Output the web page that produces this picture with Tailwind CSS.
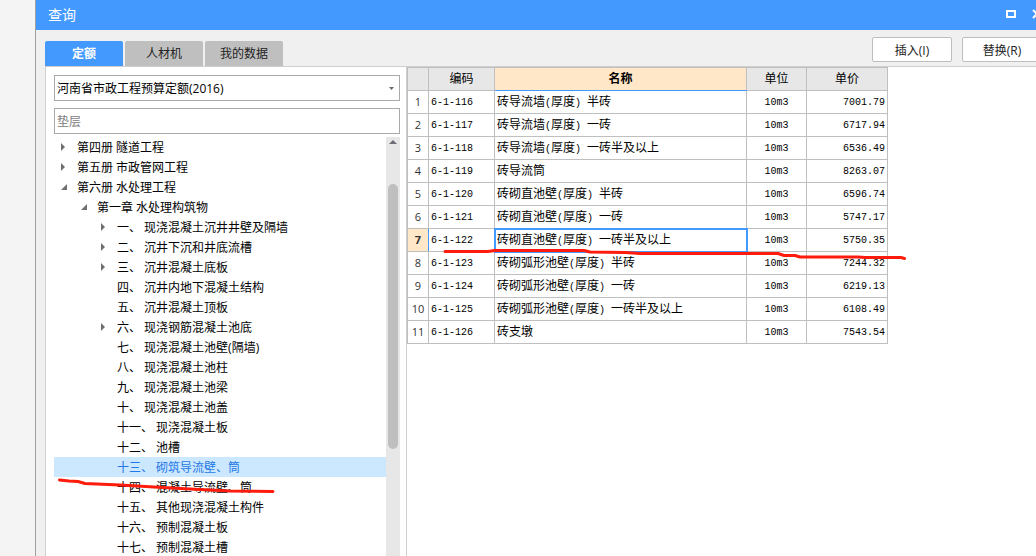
<!DOCTYPE html>
<html lang="zh-CN">
<head>
<meta charset="utf-8">
<title>查询</title>
<script src="https://cdn.jsdelivr.net/npm/@tailwindcss/browser@4"></script>
</head>
<body class="relative h-screen overflow-hidden bg-[#f4f4f4] pl-[35px] font-['Open_Sans','Noto_Sans_CJK_SC',sans-serif] text-[12px] text-black">
<div class="flex h-full flex-col overflow-hidden border-l border-[#a0a0a0] bg-[#f0f0f0]">
  <header class="flex h-[30px] shrink-0 items-center justify-between bg-[#4499ff] pl-3 text-white">
    <h1 class="text-[14px] leading-5">查询</h1>
    <div class="-mr-1.5 flex gap-4 pb-0.5">
      <button aria-label="最大化"><svg class="block h-2.5 w-2.5" viewBox="0 0 10 10"><path d="M1 2h8v6H1z" fill="none" stroke="#fff" stroke-width="2"/></svg></button>
      <button aria-label="关闭"><svg class="block h-2.5 w-2.5" viewBox="0 0 10 10"><path d="M1 1l8 8M9 1L1 9" fill="none" stroke="#fff" stroke-width="2"/></svg></button>
    </div>
  </header>
  <div class="flex h-9 shrink-0 items-end justify-between pl-[9px]">
    <nav class="flex gap-0.5" role="tablist">
      <button role="tab" aria-selected="true" class="h-[25px] w-[78px] rounded-t-xs bg-[#4499ff] font-bold text-white">定额</button>
      <button role="tab" aria-selected="false" class="h-[25px] w-[78px] rounded-t-xs bg-[#bfbfbf] text-[#222]">人材机</button>
      <button role="tab" aria-selected="false" class="h-[25px] w-[78px] rounded-t-xs bg-[#bfbfbf] text-[#222]">我的数据</button>
    </nav>
    <div class="-mr-1.5 flex gap-2.5 pb-1">
      <button class="h-[25px] w-20 rounded-xs border border-[#bebebe] bg-white pt-0.5 text-[#222]">插入(I)</button>
      <button class="h-[25px] w-20 rounded-xs border border-[#bebebe] bg-white pt-0.5 text-[#222]">替换(R)</button>
    </div>
  </div>
  <main class="ml-[9px] flex min-h-0 flex-1 border-t border-l border-[#cfcfcf] bg-white">
    <aside class="flex w-[361px] shrink-0 flex-col border-r border-[#cfcfcf] pt-2 pr-1.5 pl-2">
      <div class="relative">
        <select aria-label="定额库" class="block h-[26px] w-full appearance-none border border-[#a9a9a9] bg-white px-0.5 pt-0.5">
          <option>河南省市政工程预算定额(2016)</option>
        </select>
        <svg class="pointer-events-none absolute top-3 right-1.5 h-[3px] w-[5px]" viewBox="0 0 5 3"><path d="M0 0h5L2.5 3z" fill="#6a6a6a"/></svg>
      </div>
      <input aria-label="搜索" placeholder="垫层" class="mt-[7px] block h-[26px] w-full shrink-0 border border-[#a9a9a9] px-0.5 placeholder:text-[#808080]">
      <div class="mt-[3px] flex min-h-0 flex-1 overflow-hidden">
        <ul role="tree" class="flex-1 leading-[22px] whitespace-nowrap">
          <li class="flex h-5 items-start pl-[7px]"><button aria-label="展开" class="w-4 self-center"><svg class="block h-2 w-2" viewBox="0 0 8 8"><path d="M0 0v8l4-4z" fill="#707070"/></svg></button><span>第四册 隧道工程</span></li>
          <li class="flex h-5 items-start pl-[7px]"><button aria-label="展开" class="w-4 self-center"><svg class="block h-2 w-2" viewBox="0 0 8 8"><path d="M0 0v8l4-4z" fill="#707070"/></svg></button><span>第五册 市政管网工程</span></li>
          <li class="flex h-5 items-start pl-[7px]"><button aria-label="折叠" class="w-4 self-center"><svg class="block h-2 w-2" viewBox="0 0 8 8"><path d="M6 1v6H0z" fill="#707070"/></svg></button><span>第六册 水处理工程</span></li>
          <li class="flex h-5 items-start pl-[27px]"><button aria-label="折叠" class="w-4 self-center"><svg class="block h-2 w-2" viewBox="0 0 8 8"><path d="M6 1v6H0z" fill="#707070"/></svg></button><span>第一章 水处理构筑物</span></li>
          <li class="flex h-5 items-start pl-[47px]"><button aria-label="展开" class="w-4 self-center"><svg class="block h-2 w-2" viewBox="0 0 8 8"><path d="M0 0v8l4-4z" fill="#707070"/></svg></button><span>一、 现浇混凝土沉井井壁及隔墙</span></li>
          <li class="flex h-5 items-start pl-[47px]"><button aria-label="展开" class="w-4 self-center"><svg class="block h-2 w-2" viewBox="0 0 8 8"><path d="M0 0v8l4-4z" fill="#707070"/></svg></button><span>二、 沉井下沉和井底流槽</span></li>
          <li class="flex h-5 items-start pl-[47px]"><button aria-label="展开" class="w-4 self-center"><svg class="block h-2 w-2" viewBox="0 0 8 8"><path d="M0 0v8l4-4z" fill="#707070"/></svg></button><span>三、 沉井混凝土底板</span></li>
          <li class="h-5 pl-[63px]">四、 沉井内地下混凝土结构</li>
          <li class="h-5 pl-[63px]">五、 沉井混凝土顶板</li>
          <li class="flex h-5 items-start pl-[47px]"><button aria-label="展开" class="w-4 self-center"><svg class="block h-2 w-2" viewBox="0 0 8 8"><path d="M0 0v8l4-4z" fill="#707070"/></svg></button><span>六、 现浇钢筋混凝土池底</span></li>
          <li class="h-5 pl-[63px]">七、 现浇混凝土池壁(隔墙)</li>
          <li class="h-5 pl-[63px]">八、 现浇混凝土池柱</li>
          <li class="h-5 pl-[63px]">九、 现浇混凝土池梁</li>
          <li class="h-5 pl-[63px]">十、 现浇混凝土池盖</li>
          <li class="h-5 pl-[63px]">十一、 现浇混凝土板</li>
          <li class="h-5 pl-[63px]">十二、 池槽</li>
          <li aria-selected="true" class="h-5 bg-[#cce8ff] pl-[63px] text-[#1e78e6]">十三、 砌筑导流壁、筒</li>
          <li class="h-5 pl-[63px]">十四、 混凝土导流壁、筒</li>
          <li class="h-5 pl-[63px]">十五、 其他现浇混凝土构件</li>
          <li class="h-5 pl-[63px]">十六、 预制混凝土板</li>
          <li class="h-5 pl-[63px]">十七、 预制混凝土槽</li>
        </ul>
        <div class="flex w-3.5 flex-col items-center bg-[#e7e7e7] pt-[3px]">
          <svg class="h-1 w-2 shrink-0" viewBox="0 0 8 4"><path d="M0 4h8L4 0z" fill="#6d6d78"/></svg>
          <div class="mt-10 h-[265px] w-2.5 shrink-0 rounded-full bg-[#bfbfbf]"></div>
        </div>
      </div>
    </aside>
    <section class="min-w-0 flex-1">
      <table class="w-[481px] table-fixed border-collapse font-['Liberation_Mono','Noto_Sans_CJK_SC',monospace] text-[10px] leading-[18px] whitespace-nowrap [&_td]:h-[23px] [&_td]:border [&_td]:border-[#bfbfbf] [&_td]:p-0 [&_td]:pt-0.5 [&_td]:pl-0.5 [&_td:nth-child(4)]:pl-0 [&_td:nth-child(4)]:text-center [&_td:nth-child(5)]:pr-0.5 [&_td:nth-child(5)]:text-right [&_tbody_th]:border [&_tbody_th]:border-[#bfbfbf] [&_tbody_th]:p-0 [&_tbody_th]:font-['Open_Sans'] [&_tbody_th]:text-[11px] [&_tbody_th]:text-[#333] [&_td_span]:text-[12px] [&_thead_th]:border [&_thead_th]:border-[#bfbfbf] [&_thead_th]:p-0 [&_thead_th]:pt-0.5">
        <colgroup><col class="w-[21px]"><col class="w-[66px]"><col class="w-[252px]"><col class="w-[60px]"><col class="w-[81px]"></colgroup>
        <thead>
          <tr class="h-[23px] bg-[#e7e7e7] text-[12px]"><th></th><th class="font-normal">编码</th><th class="border-b-[#4499ff]! bg-[#ffe7c8] font-bold">名称</th><th class="font-normal">单位</th><th class="font-normal">单价</th></tr>
        </thead>
        <tbody>
          <tr><th class="font-normal">1</th><td>6-1-116</td><td><span>砖导流墙</span>(<span>厚度</span>) <span>半砖</span></td><td>10m3</td><td>7001.79</td></tr>
          <tr><th class="font-normal">2</th><td>6-1-117</td><td><span>砖导流墙</span>(<span>厚度</span>) <span>一砖</span></td><td>10m3</td><td>6717.94</td></tr>
          <tr><th class="font-normal">3</th><td>6-1-118</td><td><span>砖导流墙</span>(<span>厚度</span>) <span>一砖半及以上</span></td><td>10m3</td><td>6536.49</td></tr>
          <tr><th class="font-normal">4</th><td>6-1-119</td><td><span>砖导流筒</span></td><td>10m3</td><td>8263.07</td></tr>
          <tr><th class="font-normal">5</th><td>6-1-120</td><td><span>砖砌直池壁</span>(<span>厚度</span>) <span>半砖</span></td><td>10m3</td><td>6596.74</td></tr>
          <tr><th class="font-normal">6</th><td>6-1-121</td><td><span>砖砌直池壁</span>(<span>厚度</span>) <span>一砖</span></td><td>10m3</td><td>5747.17</td></tr>
          <tr><th class="border-r-[#4499ff]! bg-[#ffe7c8] font-bold">7</th><td>6-1-122</td><td class="outline-2 -outline-offset-1 outline-[#4499ff]"><span>砖砌直池壁</span>(<span>厚度</span>) <span>一砖半及以上</span></td><td>10m3</td><td>5750.35</td></tr>
          <tr><th class="font-normal">8</th><td>6-1-123</td><td><span>砖砌弧形池壁</span>(<span>厚度</span>) <span>半砖</span></td><td>10m3</td><td>7244.32</td></tr>
          <tr><th class="font-normal">9</th><td>6-1-124</td><td><span>砖砌弧形池壁</span>(<span>厚度</span>) <span>一砖</span></td><td>10m3</td><td>6219.13</td></tr>
          <tr><th class="font-normal">10</th><td>6-1-125</td><td><span>砖砌弧形池壁</span>(<span>厚度</span>) <span>一砖半及以上</span></td><td>10m3</td><td>6108.49</td></tr>
          <tr><th class="font-normal">11</th><td>6-1-126</td><td><span>砖支墩</span></td><td>10m3</td><td>7543.54</td></tr>
        </tbody>
      </table>
    </section>
  </main>
</div>
<!-- hand-drawn red underlines -->
<svg class="pointer-events-none absolute top-0 left-0 h-[556px] w-[1036px]" viewBox="0 0 1036 556" fill="none" stroke="#ff1c0c" stroke-width="3" stroke-linecap="round" stroke-linejoin="round">
  <path d="M59.500 480L69 481L78 481.500L85 483.500L120 485L154 487L190 489L230 491L273 491.500"/>
  <path d="M445 251.500H488L495 250.500H584L590 252L625 252.500L640 253.500H778L784 255.500H795L800 257H858L865 257.500H901L904.500 258.500"/>
</svg>
</body>
</html>
